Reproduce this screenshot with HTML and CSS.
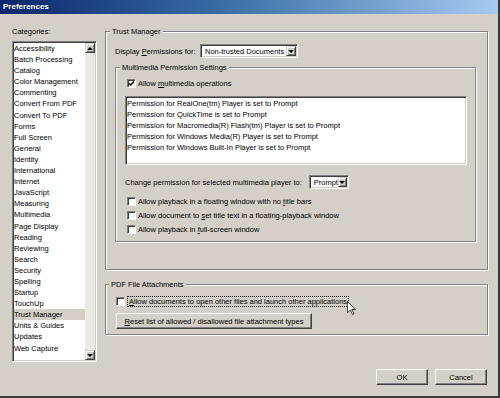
FILE: index.html
```html
<!DOCTYPE html>
<html lang="en">
<head>
    <meta charset="UTF-8">
    <title>Preferences</title>
    <link rel="stylesheet" href="styles.css">
</head>
<body>
    <div class="window">
        <div class="titlebar">Preferences</div>

        <div class="content">
            <!-- left: categories -->
            <div class="categories">
                <div class="label">Categories:</div>
                <div class="listbox">
                    <ul class="cat-items">
                        <li>Accessibility</li>
                        <li>Batch Processing</li>
                        <li>Catalog</li>
                        <li>Color Management</li>
                        <li>Commenting</li>
                        <li>Convert From PDF</li>
                        <li>Convert To PDF</li>
                        <li>Forms</li>
                        <li>Full Screen</li>
                        <li>General</li>
                        <li>Identity</li>
                        <li>International</li>
                        <li>Internet</li>
                        <li>JavaScript</li>
                        <li>Measuring</li>
                        <li>Multimedia</li>
                        <li>Page Display</li>
                        <li>Reading</li>
                        <li>Reviewing</li>
                        <li>Search</li>
                        <li>Security</li>
                        <li>Spelling</li>
                        <li>Startup</li>
                        <li>TouchUp</li>
                        <li class="selected">Trust Manager</li>
                        <li>Units &amp; Guides</li>
                        <li>Updates</li>
                        <li>Web Capture</li>
                    </ul>
                    <div class="scrollbar">
                        <div class="sb-btn"><span class="arrow-up"></span></div>
                        <div class="sb-track"></div>
                        <div class="sb-btn"><span class="arrow-down"></span></div>
                    </div>
                </div>
            </div>

            <!-- right: settings -->
            <div class="panel">
                <fieldset class="group trust">
                    <legend>Trust Manager</legend>
                    <div class="display-row">
                        <span class="display-label">Display <u>P</u>ermissions for:</span>
                        <div class="combo combo-docs">
                            <span class="combo-text">Non-trusted Documents</span>
                            <span class="combo-btn"><span class="arrow-down"></span></span>
                        </div>
                    </div>

                    <fieldset class="group multimedia">
                        <legend>Multimedia Permission Settings</legend>
                        <div class="check-row first">
                            <span class="box"><svg width="7" height="7" viewBox="0 0 7 7"><path d="M1 3.2 L2.8 5 L6 1.6" fill="none" stroke="#000" stroke-width="1.4"/></svg></span>
                            <span>Allow <u>m</u>ultimedia operations</span>
                        </div>
                        <ul class="players">
                            <li>Permission for RealOne(tm) Player is set to Prompt</li>
                            <li>Permission for QuickTime is set to Prompt</li>
                            <li>Permission for Macromedia(R) Flash(tm) Player is set to Prompt</li>
                            <li>Permission for Windows Media(R) Player is set to Prompt</li>
                            <li>Permission for Windows Built-In Player is set to Prompt</li>
                        </ul>
                        <div class="change-row">
                            <span class="change-label">Chan<u>g</u>e permission for selected multimedia player to:</span>
                            <div class="combo combo-prompt">
                                <span class="combo-text">Prompt</span>
                                <span class="combo-btn"><span class="arrow-down"></span></span>
                            </div>
                        </div>
                        <div class="options">
                            <div class="check-row"><span class="box"></span><span>Allow playback in a floating window with no <u>t</u>itle bars</span></div>
                            <div class="check-row"><span class="box"></span><span>Allow document to <u>s</u>et title text in a floating-playback window</span></div>
                            <div class="check-row"><span class="box"></span><span>Allow playback in <u>f</u>ull-screen window</span></div>
                        </div>
                    </fieldset>
                </fieldset>

                <fieldset class="group pdf">
                    <legend>PDF File Attachments</legend>
                    <div class="check-row pdf-check">
                        <span class="box"></span>
                        <span class="focus"><u>A</u>llow documents to open other files and launch other applications</span>
                    </div>
                    <button class="btn reset"><u>R</u>eset list of allowed / disallowed file attachment types</button>
                </fieldset>
            </div>
        </div>

        <div class="footer">
            <button class="btn ok">OK</button>
            <button class="btn cancel">Cancel</button>
        </div>

        <!-- mouse pointer over the focused checkbox label -->
        <svg class="cursor" width="9" height="14" viewBox="0 0 12 19">
            <path d="M0.5 0.5 V16 L4.5 12 L7.5 18.5 L9.5 17.5 L6.5 11.5 H11.5 Z" fill="#fff" stroke="#000" stroke-width="1"/>
        </svg>
    </div>
</body>
</html>
```

FILE: styles.css
```css
/* Windows classic preferences dialog */
body {
    margin: 0;
    font-family: "Liberation Sans", Arial, sans-serif;
    font-size: 7.5px;
    color: #000;
}

.window {
    position: relative;
    width: 500px;
    height: 398px;
    box-sizing: border-box;
    background: #d4d0c8;
    border-right: 2px solid #3a3a3a;
    border-bottom: 2px solid #3a3a3a;
}

.titlebar {
    height: 14px;
    line-height: 14px;
    padding-left: 3px;
    font-size: 8px;
    font-weight: bold;
    color: #fff;
    background: linear-gradient(to right, #0a246a, #3a6ea5 45%, #a6caf0);
}

.content {
    display: flex;
    padding: 12px 0 0 12px;
}

/* categories column */
.categories {
    width: 85px;
}
.label {
    line-height: 11px;
}
.listbox {
    display: flex;
    height: 321px;
    margin-top: 4px;
    box-sizing: border-box;
    background: #fff;
    border: 1px solid;
    border-color: #808080 #fff #fff #808080;
    box-shadow: inset 1px 1px 0 #404040, inset -1px -1px 0 #d4d0c8;
    padding: 1px;
}
.cat-items {
    flex: 1;
    margin: 0;
    padding: 0;
    list-style: none;
}
.cat-items li {
    line-height: 11.1px;
    white-space: nowrap;
}
.cat-items .selected {
    background: #d4d0c8;
}
.scrollbar {
    width: 10px;
    display: flex;
    flex-direction: column;
}
.sb-btn {
    height: 10px;
    box-sizing: border-box;
    display: flex;
    align-items: center;
    justify-content: center;
    background: #d4d0c8;
    border: 1px solid;
    border-color: #d4d0c8 #404040 #404040 #d4d0c8;
    box-shadow: inset 1px 1px 0 #fff, inset -1px -1px 0 #808080;
}
.sb-track {
    flex: 1;
    background: #ebe9e4;
}
.arrow-up,
.arrow-down {
    width: 0;
    height: 0;
    border-left: 3px solid transparent;
    border-right: 3px solid transparent;
}
.arrow-up {
    border-bottom: 3px solid #000;
}
.arrow-down {
    border-top: 3px solid #000;
}

/* right panel */
.panel {
    width: 383px;
    margin-left: 8px;
}

.group {
    margin: 0;
    min-width: 0;
    box-sizing: border-box;
    border: 1px solid #808080;
    box-shadow: inset 1px 1px 0 #fff, 1px 1px 0 #fff;
}
.group legend {
    padding: 0 2px;
    line-height: 11px;
    background: #d4d0c8;
}

.trust {
    width: 383px;
    padding: 7px 11px 27px 9px;
}
.trust > legend {
    margin-left: -5px;
}

.display-row {
    display: flex;
    align-items: center;
    height: 14px;
}
.display-label {
    width: 85px;
}

.combo {
    display: flex;
    align-items: center;
    height: 14px;
    box-sizing: border-box;
    background: #fff;
    border: 1px solid;
    border-color: #808080 #fff #fff #808080;
    box-shadow: inset 1px 1px 0 #404040, inset -1px -1px 0 #d4d0c8;
    padding: 1px;
}
.combo-text {
    flex: 1;
    padding-left: 3px;
    white-space: nowrap;
}
.combo-btn {
    width: 10px;
    height: 10px;
    box-sizing: border-box;
    display: flex;
    align-items: center;
    justify-content: center;
    background: #d4d0c8;
    border: 1px solid;
    border-color: #d4d0c8 #404040 #404040 #d4d0c8;
    box-shadow: inset 1px 1px 0 #fff, inset -1px -1px 0 #808080;
}
.combo-docs {
    width: 98px;
}
.combo-prompt {
    width: 40px;
    margin-left: 7px;
}

.multimedia {
    width: 361px;
    margin-top: 4px;
    padding: 5px 8px 5px 9px;
}
.multimedia > legend {
    margin-left: -5px;
}

.check-row {
    display: flex;
    align-items: center;
    height: 14px;
    white-space: nowrap;
}
.check-row.first {
    height: 11px;
}
.box {
    width: 9px;
    height: 9px;
    margin: 0 2px;
    box-sizing: border-box;
    display: flex;
    align-items: center;
    justify-content: center;
    background: #fff;
    border: 1px solid;
    border-color: #808080 #fff #fff #808080;
    box-shadow: inset 1px 1px 0 #404040;
}

.players {
    height: 69px;
    margin: 7px 0 0;
    padding: 1px 0 0 1px;
    box-sizing: border-box;
    list-style: none;
    background: #fff;
    border: 1px solid;
    border-color: #808080 #fff #fff #808080;
    box-shadow: inset 1px 1px 0 #404040, inset -1px -1px 0 #d4d0c8;
}
.players li {
    line-height: 11px;
    white-space: nowrap;
}

.change-row {
    display: flex;
    align-items: center;
    height: 14px;
    margin-top: 10px;
}

.options {
    margin-top: 5px;
}

.pdf {
    width: 383px;
    margin-top: 9px;
    padding: 5px 10px 5px 10px;
}
.pdf > legend {
    margin-left: -7px;
}
.pdf-check {
    height: 12px;
}
.pdf-check .box {
    margin: 0 2px 0 0;
}
.focus {
    padding: 0 1px;
    line-height: 9px;
    border: 1px dotted #000;
}

.btn {
    height: 16px;
    padding: 0;
    box-sizing: border-box;
    font: inherit;
    color: #000;
    background: #d4d0c8;
    border: 1px solid;
    border-color: #fff #404040 #404040 #fff;
    box-shadow: inset -1px -1px 0 #808080;
}
.reset {
    display: block;
    width: 196px;
    margin-top: 6px;
}

.footer {
    display: flex;
    justify-content: flex-end;
    gap: 7px;
    margin-top: 7px;
    padding-right: 11px;
}
.ok,
.cancel {
    width: 52px;
}

.cursor {
    position: absolute;
    left: 347px;
    top: 301px;
}
```
